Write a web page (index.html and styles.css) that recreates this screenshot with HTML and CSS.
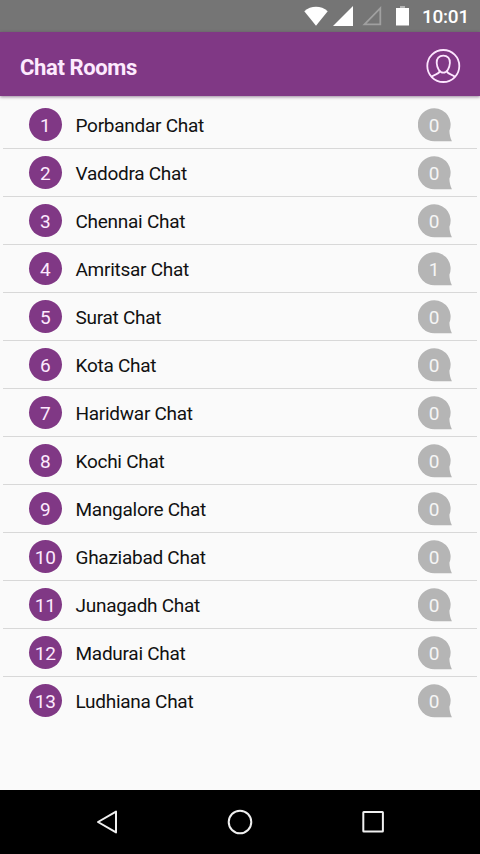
FILE: index.html
```html
<!DOCTYPE html>
<html lang="en">
<head>
<meta charset="utf-8">
<title>Chat Rooms</title>
<link rel="stylesheet" href="styles.css">
</head>
<body>
<svg class="defs" width="0" height="0" aria-hidden="true">
  <symbol id="bubble" viewBox="0 0 34 34"><path d="M16.3 .3A16.3 16.3 0 0 1 31.4 22.8C31.500 26.500 32.300 30 33.900 33.200H16.300A16.400 16.400 0 0 1 16.300 .3Z"/></symbol>
</svg>
<div class="status">
  <svg class="status-icons" width="110" height="32" viewBox="300 0 110 32">
    <path fill="#fff" d="M304.300 11.200C310.800 5.300 321.200 5.300 327.700 11.200L316 25.700Z"/>
    <path fill="#fff" d="M353 6V26H333Z"/>
    <path fill="none" stroke="#a0a0a0" stroke-width="1.800" d="M380.300 8.200V24.400H364.500Z"/>
    <path fill="#b5b5b5" d="M400 6h5v2h-5z"/>
    <path fill="#fff" d="M396 8h13v17.500h-13z"/>
  </svg>
  <span class="clock">10:01</span>
</div>
<header class="bar">
  <h1>Chat Rooms</h1>
  <svg width="36" height="36" viewBox="0 0 36 36" fill="none" stroke="#fde6ff" stroke-width="1.800">
    <circle cx="18.300" cy="18" r="16"/>
    <path d="M18.300 7.600C14 7.600 11.400 10.600 11.700 15C12 20 14.600 24.600 18.300 24.600S24.600 20 24.900 15C25.200 10.600 22.600 7.600 18.300 7.600Z"/>
    <path d="M14.800 22.800C14.900 26.300 9.500 25.800 6.300 29M21.800 22.800C21.700 26.300 27.100 25.800 30.300 29"/>
  </svg>
</header>
<main>
  <ul class="rooms">
    <li><span class="num">1</span><span class="name">Porbandar Chat</span><span class="count"><svg><use href="#bubble"/></svg><b>0</b></span></li>
    <li><span class="num">2</span><span class="name">Vadodra Chat</span><span class="count"><svg><use href="#bubble"/></svg><b>0</b></span></li>
    <li><span class="num">3</span><span class="name">Chennai Chat</span><span class="count"><svg><use href="#bubble"/></svg><b>0</b></span></li>
    <li><span class="num">4</span><span class="name">Amritsar Chat</span><span class="count"><svg><use href="#bubble"/></svg><b>1</b></span></li>
    <li><span class="num">5</span><span class="name">Surat Chat</span><span class="count"><svg><use href="#bubble"/></svg><b>0</b></span></li>
    <li><span class="num">6</span><span class="name">Kota Chat</span><span class="count"><svg><use href="#bubble"/></svg><b>0</b></span></li>
    <li><span class="num">7</span><span class="name">Haridwar Chat</span><span class="count"><svg><use href="#bubble"/></svg><b>0</b></span></li>
    <li><span class="num">8</span><span class="name">Kochi Chat</span><span class="count"><svg><use href="#bubble"/></svg><b>0</b></span></li>
    <li><span class="num">9</span><span class="name">Mangalore Chat</span><span class="count"><svg><use href="#bubble"/></svg><b>0</b></span></li>
    <li><span class="num">10</span><span class="name">Ghaziabad Chat</span><span class="count"><svg><use href="#bubble"/></svg><b>0</b></span></li>
    <li><span class="num">11</span><span class="name">Junagadh Chat</span><span class="count"><svg><use href="#bubble"/></svg><b>0</b></span></li>
    <li><span class="num">12</span><span class="name">Madurai Chat</span><span class="count"><svg><use href="#bubble"/></svg><b>0</b></span></li>
    <li><span class="num">13</span><span class="name">Ludhiana Chat</span><span class="count"><svg><use href="#bubble"/></svg><b>0</b></span></li>
  </ul>
</main>
<nav class="keys">
  <svg width="28" height="28" viewBox="0 0 28 28"><path d="M23 3.600V24.400L5 14Z"/></svg>
  <svg width="28" height="28" viewBox="0 0 28 28"><circle cx="14" cy="14" r="11.300"/></svg>
  <svg width="28" height="28" viewBox="0 0 28 28"><rect x="4.300" y="4" width="19.600" height="19.600" rx=".5"/></svg>
</nav>
</body>
</html>
```
FILE: styles.css
```css
* { box-sizing: border-box; }
body {
  margin: 0;
  height: 854px;
  display: flex;
  flex-direction: column;
  overflow: hidden;
  background: #fafafa;
  font-family: Roboto, "Liberation Sans", sans-serif;
  color: #111;
}
.defs { position: absolute; }
.status {
  height: 32px;
  flex: none;
  display: flex;
  align-items: center;
  justify-content: flex-end;
  gap: 12px;
  padding-right: 11px;
  background: #757575;
}
.clock {
  width: 47px;
  color: #fff;
  font-size: 19px;
  font-weight: 500;
  letter-spacing: -.25px;
  line-height: 32px;
  padding-top: 1px;
}
.bar {
  height: 64px;
  flex: none;
  display: flex;
  align-items: center;
  justify-content: space-between;
  padding: 4px 19px 0 20px;
  background: #803885;
  box-shadow: 0 1px 3px rgba(60, 20, 65, .5);
}
.bar h1 {
  margin: 0;
  padding-top: 3px;
  color: #fdeafe;
  font-size: 22px;
  font-weight: 700;
  letter-spacing: -.37px;
  line-height: 26px;
}
main { flex: 1; padding: 5px 3px 0; }
.rooms { list-style: none; margin: 0; padding: 0; }
.rooms li {
  height: 48px;
  display: flex;
  align-items: center;
  padding: 0 25px 0 25.500px;
  border-bottom: 1px solid #d8d8d8;
}
.rooms li:last-child { border-bottom-color: transparent; }
.num {
  width: 33.500px;
  height: 33.500px;
  border-radius: 50%;
  background: #803885;
  color: #fdeafe;
  font-size: 19px;
  letter-spacing: -.2px;
  line-height: 35px;
  text-align: center;
}
.name {
  flex: 1;
  margin-left: 13.500px;
  font-size: 19px;
  letter-spacing: -.27px;
  line-height: 24px;
  padding-top: 2px;
}
.count { display: grid; width: 34px; height: 34px; }
.count svg, .count b { grid-area: 1 / 1; width: 34px; height: 34px; }
.count svg { fill: #b5b5b5; }
.count b {
  width: 32px;
  color: #f5f5f5;
  font-size: 19px;
  font-weight: 400;
  line-height: 35px;
  text-align: center;
  z-index: 1;
}
.keys {
  height: 64px;
  flex: none;
  display: flex;
  align-items: center;
  justify-content: space-between;
  padding: 0 93px;
  background: #000;
}
.keys svg { fill: none; stroke: #f0f0f0; stroke-width: 2; stroke-linejoin: round; }
```
